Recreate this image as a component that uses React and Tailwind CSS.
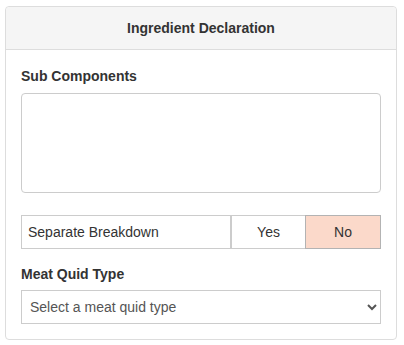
import { useState } from "react";

function App() {
  const [breakdown, setBreakdown] = useState("No");
  const [quid, setQuid] = useState("");

  return (
    <div className="pt-[6px] pl-[5px] font-['Liberation_Sans',Arial,sans-serif] text-[14px] text-[#333]">
      <div className="w-[392px] border border-[#ddd] rounded-[4px] bg-white">
        <div className="h-[43px] flex items-center justify-center bg-[#f5f5f5] border-b border-[#ddd] rounded-t-[4px] font-bold">
          Ingredient Declaration
        </div>
        <div className="px-[15px] pt-[16px] pb-[15px]">
          <label className="block font-bold leading-[20px] mb-[7px]">Sub Components</label>
          <textarea className="block w-full h-[100px] border border-[#ccc] rounded-[4px] resize-none outline-none" />

          <div className="flex h-[34px] mt-[22px]">
            <div className="w-[210px] flex items-center pl-[6px] border border-[#ccc]">
              Separate Breakdown
            </div>
            {["Yes", "No"].map((opt) => (
              <button
                key={opt}
                onClick={() => setBreakdown(opt)}
                className={
                  opt === "No"
                    ? "flex-1 flex items-center justify-center border " +
                      (breakdown === opt ? "bg-[#fbd9ca] border-[#b3b3b3]" : "bg-white border-[#ccc]")
                    : "w-[74px] flex items-center justify-center border border-r-0 " +
                      (breakdown === opt ? "bg-[#fbd9ca] border-[#b3b3b3]" : "bg-white border-[#ccc]")
                }
              >
                {opt}
              </button>
            ))}
          </div>

          <label className="block font-bold leading-[20px] mt-[15px] mb-[6px]">Meat Quid Type</label>
          <select
            value={quid}
            onChange={(e) => setQuid(e.target.value)}
            className="block w-full h-[34px] border border-[#ccc] bg-white text-[#555] pl-[4px] pr-[4px] outline-none"
          >
            <option value="">Select a meat quid type</option>
            <option value="beef">Beef</option>
            <option value="pork">Pork</option>
            <option value="chicken">Chicken</option>
          </select>
        </div>
      </div>
    </div>
  );
}

export default App;
